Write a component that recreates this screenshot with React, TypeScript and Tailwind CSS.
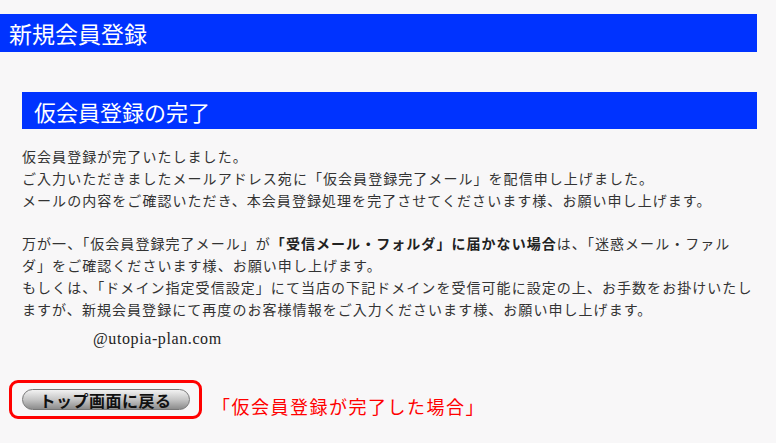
import React from "react";

const jp = "font-['Noto_Sans_CJK_JP','Noto_Sans',sans-serif]";

export default function App() {
  return (
    <div className={`w-[776px] h-[443px] overflow-hidden bg-[#f8f7f8] pt-[14px] ${jp}`}>
      <div className="flex h-[38px] w-[757px] items-center bg-[#0033ff] pl-[9px] text-[23px] leading-none text-white">
        新規会員登録
      </div>

      <div className="ml-[22px] mt-[40px] w-[735px]">
        <div className="flex h-[37px] items-center bg-[#0033ff] pl-[12px] text-[22px] leading-none text-white">
          仮会員登録の完了
        </div>

        <div className="mt-[17px] whitespace-nowrap text-[14px] leading-[21.8px] tracking-[1.05px] text-[#333]">
          <p>仮会員登録が完了いたしました。</p>
          <p>ご入力いただきましたメールアドレス宛に「仮会員登録完了メール」を配信申し上げました。</p>
          <p>メールの内容をご確認いただき、本会員登録処理を完了させてくださいます様、お願い申し上げます。</p>
          <p>&nbsp;</p>
          <p>
            万が一、「仮会員登録完了メール」が<b className="font-bold text-[#222]">「受信メール・フォルダ」に届かない場合</b>は、「迷惑メール・ファル
          </p>
          <p>ダ」をご確認くださいます様、お願い申し上げます。</p>
          <p>もしくは、「ドメイン指定受信設定」にて当店の下記ドメインを受信可能に設定の上、お手数をお掛けいたし</p>
          <p>ますが、新規会員登録にて再度のお客様情報をご入力くださいます様、お願い申し上げます。</p>
        </div>

        <p className="mt-[8px] pl-[71px] font-['Liberation_Serif',serif] text-[16px] leading-[22px] tracking-[0.6px] text-[#222]">
          @utopia-plan.com
        </p>
      </div>

      <div className="ml-[9px] mt-[30px] flex items-end gap-[10px]">
        <div className="flex h-[39px] w-[193px] items-center justify-center rounded-[9px] border-[3px] border-[#ff0000]">
          <button className="flex h-[21px] w-[168px] items-center justify-center rounded-full border border-[#777] bg-gradient-to-b from-[#f2f2f2] via-[#c6c6c6] to-[#8c8c8c] text-[16px] font-bold leading-none tracking-[0.5px] text-[#111]">
            トップ画面に戻る
          </button>
        </div>
        <span className="pb-[4px] text-[18px] leading-[18px] tracking-[1.5px] text-[#ff0000]">
          「仮会員登録が完了した場合」
        </span>
      </div>
    </div>
  );
}
